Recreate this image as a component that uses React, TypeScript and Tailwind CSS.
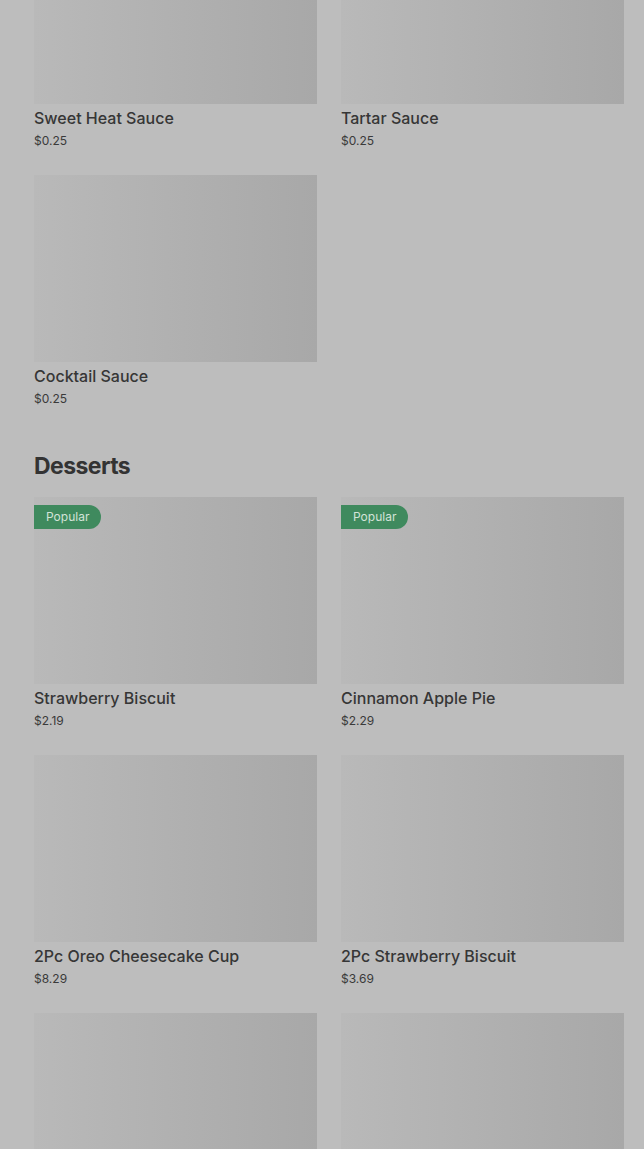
type Item = { name: string; price: string; popular?: boolean };

const sauces: Item[] = [
  { name: "Sweet Heat Sauce", price: "$0.25" },
  { name: "Tartar Sauce", price: "$0.25" },
  { name: "Cocktail Sauce", price: "$0.25" },
];

const desserts: Item[] = [
  { name: "Strawberry Biscuit", price: "$2.19", popular: true },
  { name: "Cinnamon Apple Pie", price: "$2.29", popular: true },
  { name: "2Pc Oreo Cheesecake Cup", price: "$8.29" },
  { name: "2Pc Strawberry Biscuit", price: "$3.69" },
  { name: "", price: "" },
  { name: "", price: "" },
];

function Card({ item }: { item: Item }) {
  return (
    <div className="flex flex-col">
      <div className="relative h-[187px] bg-gradient-to-r from-[#b9b9b9] to-[#a8a8a8]">
        {item.popular && (
          <span className="absolute left-0 top-2 flex h-6 items-center rounded-r-full bg-[#3f8a5e] pl-3 pr-3 text-[12px] text-[#d3e3d8]">
            Popular
          </span>
        )}
      </div>
      {item.name && (
        <>
          <div className="mt-[2px] text-[16px] leading-6 font-medium text-[#363636]">
            {item.name}
          </div>
          <div className="mt-[1px] text-[12px] leading-5 text-[#3a3a3a]">{item.price}</div>
        </>
      )}
    </div>
  );
}

export default function App() {
  return (
    <div
      className="h-[1149px] overflow-hidden bg-[#bdbdbd]"
      style={{ fontFamily: "Inter, 'Noto Sans', sans-serif" }}
    >
      <div className="-mt-[83px] pl-[34px] pr-[20px]">
        <div className="grid grid-cols-2 gap-x-6 gap-y-6">
          {sauces.map((s, i) => (
            <Card key={i} item={s} />
          ))}
        </div>

        <h2 className="mt-[41px] mb-[15px] text-[23px] leading-8 font-bold tracking-tight text-[#333333]">
          Desserts
        </h2>

        <div className="grid grid-cols-2 gap-x-6 gap-y-6">
          {desserts.map((d, i) => (
            <Card key={i} item={d} />
          ))}
        </div>
      </div>
    </div>
  );
}
